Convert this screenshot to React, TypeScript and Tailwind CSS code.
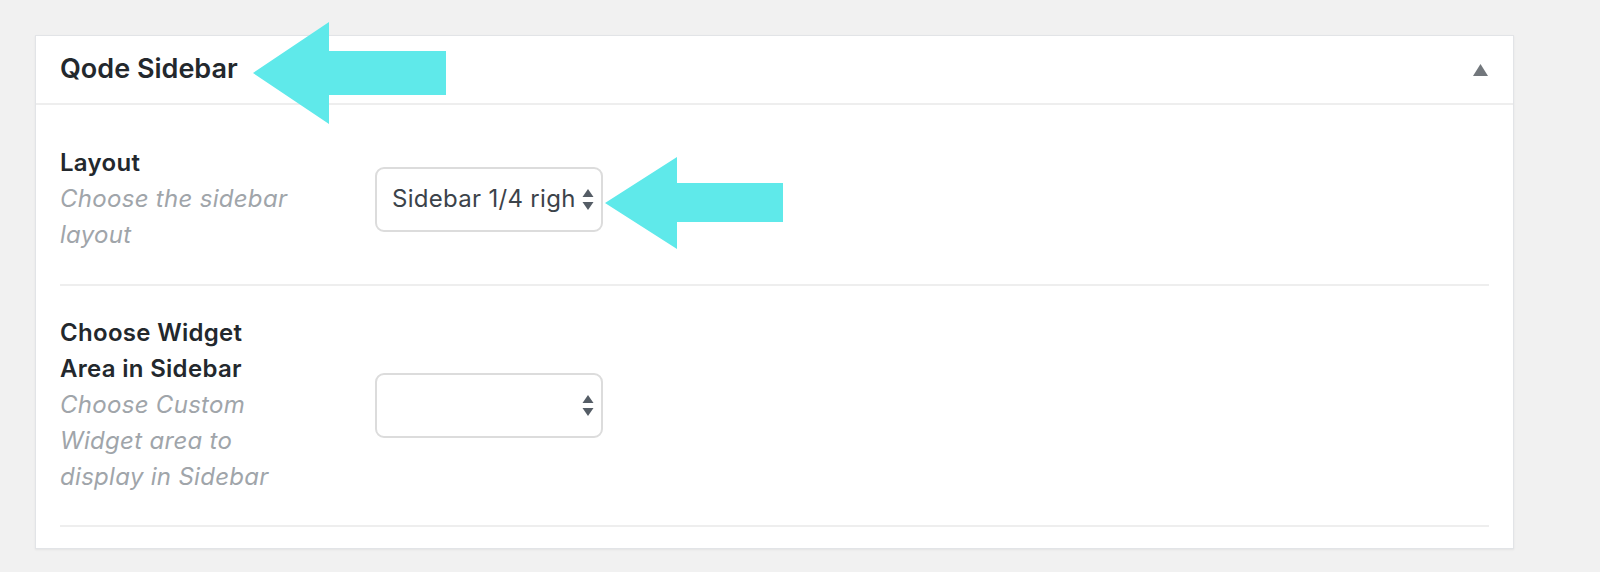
const font = "font-['Inter','Liberation_Sans',sans-serif]";

const SelectArrows = () => (
  <svg width="12" height="21" viewBox="0 0 12 21" className="shrink-0">
    <polygon points="6,0 11.5,8 0.5,8" fill="#555d66" />
    <polygon points="0.5,13 11.5,13 6,21" fill="#555d66" />
  </svg>
);

const FakeSelect = ({ value }: { value?: string }) => (
  <div className="ml-[83px] w-[228px] h-[65px] shrink-0 flex items-center justify-between border-2 border-[#dcdcdc] rounded-[9px] bg-white pl-[15px] pr-[7px]">
    <span className="whitespace-nowrap text-[24px] tracking-[0.3px] text-[#3c434a]">
      {value}
    </span>
    <SelectArrows />
  </div>
);

const Row = ({
  label,
  desc,
  value,
  className,
}: {
  label: string;
  desc: string;
  value?: string;
  className: string;
}) => (
  <div className={`flex items-center border-b-2 border-[#eeeeee] ${className}`}>
    <div className="w-[232px] shrink-0 leading-[36px] text-[24px] tracking-[0.3px]">
      <div className="font-semibold text-[#23282d]">{label}</div>
      <div className="italic text-[#a0a5aa]">{desc}</div>
    </div>
    <FakeSelect value={value} />
  </div>
);

export default function App() {
  return (
    <div className={`relative w-[1600px] h-[572px] bg-[#f1f1f1] pt-[35px] pl-[35px] ${font}`}>
      <div className="w-[1479px] h-[514px] bg-white border border-[#e2e4e7] shadow-[0_1px_2px_rgba(0,0,0,0.06)]">
        <div className="h-[69px] border-b-2 border-[#eeeeee] flex items-center justify-between pl-[24px] pr-[25px]">
          <h2 className="text-[27px] font-semibold text-[#23282d]">Qode Sidebar</h2>
          <svg width="15" height="12" viewBox="0 0 15 12">
            <polygon points="7.5,0 15,12 0,12" fill="#72777c" />
          </svg>
        </div>
        <div className="px-[24px]">
          <Row
            label="Layout"
            desc="Choose the sidebar layout"
            value="Sidebar 1/4 righ"
            className="pt-[40px] pb-[31px]"
          />
          <Row
            label="Choose Widget Area in Sidebar"
            desc="Choose Custom Widget area to display in Sidebar"
            className="pt-[29px] pb-[30px]"
          />
        </div>
      </div>

      {/* annotation arrows */}
      <svg
        className="absolute left-0 top-0 pointer-events-none"
        width="1600"
        height="572"
        viewBox="0 0 1600 572"
      >
        <polygon
          points="253,73 329,22 329,51 446,51 446,95 329,95 329,124"
          fill="#5fe9ea"
        />
        <polygon
          points="605,203 677,157 677,183 783,183 783,222 677,222 677,249"
          fill="#5fe9ea"
        />
      </svg>
    </div>
  );
}
